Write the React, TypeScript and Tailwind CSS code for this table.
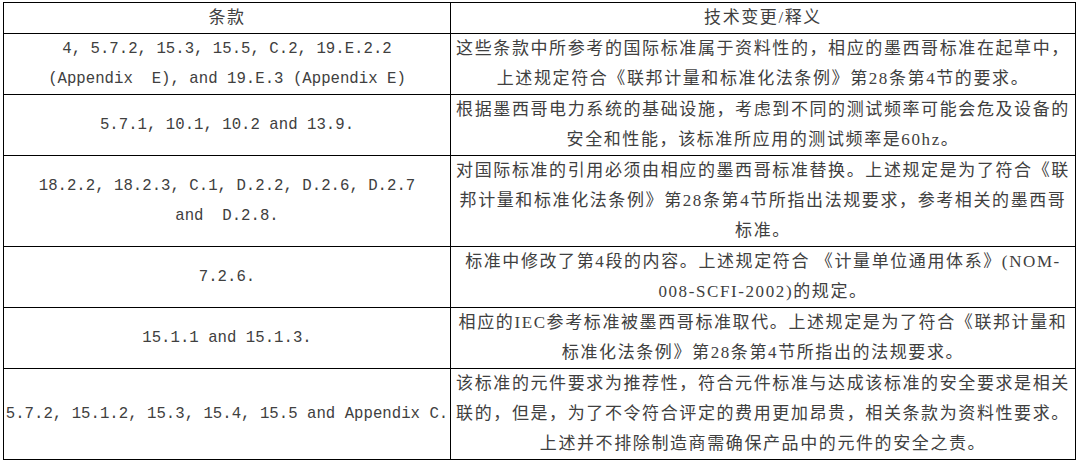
import React from 'react';

type Row = { clause: string[]; note: string[] };

const rows: Row[] = [
  {
    clause: ['4, 5.7.2, 15.3, 15.5, C.2, 19.E.2.2', '(Appendix  E), and 19.E.3 (Appendix E)'],
    note: [
      '这些条款中所参考的国际标准属于资料性的，相应的墨西哥标准在起草中，',
      '上述规定符合《联邦计量和标准化法条例》第28条第4节的要求。',
    ],
  },
  {
    clause: ['5.7.1, 10.1, 10.2 and 13.9.'],
    note: [
      '根据墨西哥电力系统的基础设施，考虑到不同的测试频率可能会危及设备的',
      '安全和性能，该标准所应用的测试频率是60hz。',
    ],
  },
  {
    clause: ['18.2.2, 18.2.3, C.1, D.2.2, D.2.6, D.2.7', 'and  D.2.8.'],
    note: [
      '对国际标准的引用必须由相应的墨西哥标准替换。上述规定是为了符合《联',
      '邦计量和标准化法条例》第28条第4节所指出法规要求，参考相关的墨西哥',
      '标准。',
    ],
  },
  {
    clause: ['7.2.6.'],
    note: ['标准中修改了第4段的内容。上述规定符合 《计量单位通用体系》(NOM-', '008-SCFI-2002)的规定。'],
  },
  {
    clause: ['15.1.1 and 15.1.3.'],
    note: [
      '相应的IEC参考标准被墨西哥标准取代。上述规定是为了符合《联邦计量和',
      '标准化法条例》第28条第4节所指出的法规要求。',
    ],
  },
  {
    clause: ['5.7.2, 15.1.2, 15.3, 15.4, 15.5 and Appendix C.'],
    note: [
      '该标准的元件要求为推荐性，符合元件标准与达成该标准的安全要求是相关',
      '联的，但是，为了不令符合评定的费用更加昂贵，相关条款为资料性要求。',
      '上述并不排除制造商需确保产品中的元件的安全之责。',
    ],
  },
];

const cjk = 'font-["Liberation_Serif","Noto_Sans_CJK_SC",serif] text-[17px] tracking-[1.6px]';
const mono = 'font-["Liberation_Mono","Noto_Sans_CJK_SC",monospace] text-[15.7px]';

export default function App() {
  return (
    <div className="w-[1078px] h-[462px] bg-white pt-[2px] pl-[3px]">
      <table className="w-[1072px] border-collapse table-fixed text-[#404040] leading-[30px]">
        <colgroup>
          <col className="w-[447px]" />
          <col className="w-[625px]" />
        </colgroup>
        <thead>
          <tr>
            <th className={`border border-black font-normal text-center ${cjk}`}>条款</th>
            <th className={`border border-black font-normal text-center ${cjk}`}>技术变更/释义</th>
          </tr>
        </thead>
        <tbody>
          {rows.map((r, i) => (
            <tr key={i}>
              <td className={`border border-black text-center align-middle px-0 whitespace-pre ${mono}`}>
                {r.clause.map((l, j) => (
                  <div key={j}>{l}</div>
                ))}
              </td>
              <td className={`border border-black text-center align-middle px-0 ${cjk}`}>
                {r.note.map((l, j) => (
                  <div key={j} className="whitespace-nowrap">
                    {l}
                  </div>
                ))}
              </td>
            </tr>
          ))}
        </tbody>
      </table>
    </div>
  );
}
